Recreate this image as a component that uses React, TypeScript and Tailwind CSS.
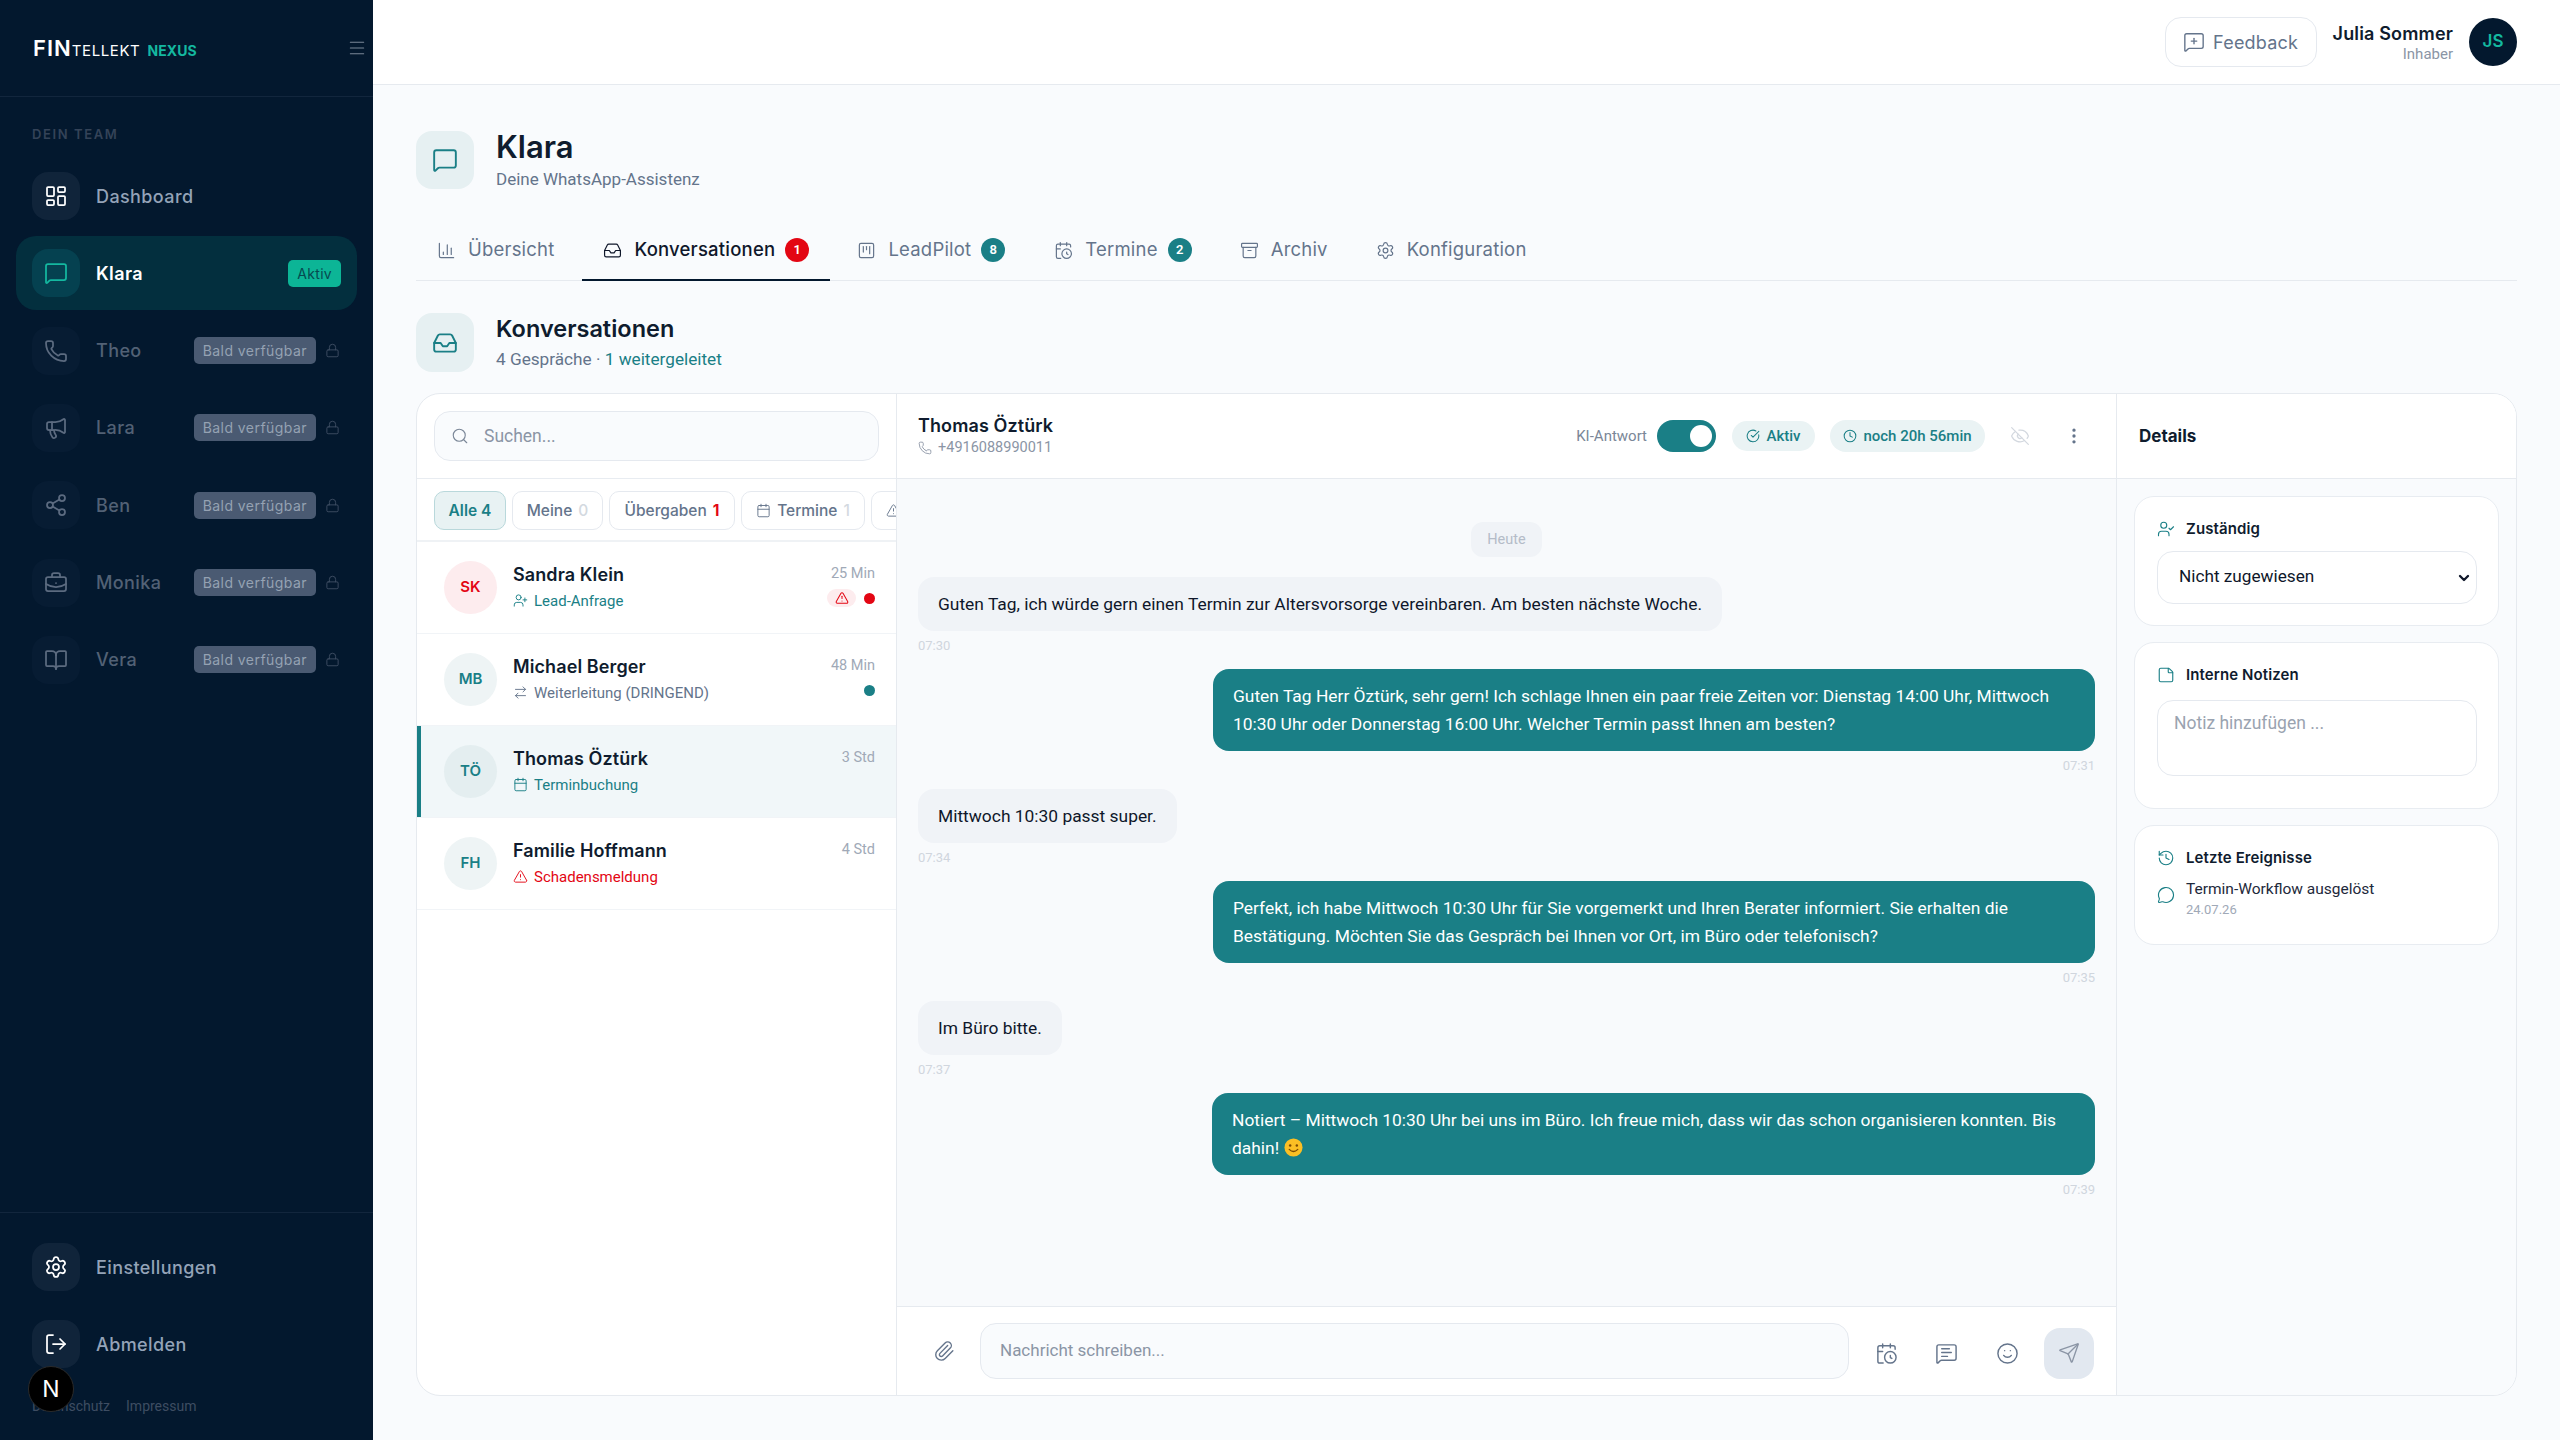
import React from "react";
import {
  LayoutDashboard, MessageSquare, Phone, Megaphone, Share2, BriefcaseBusiness, BookOpen, Lock, Settings, LogOut, Menu,
  MessageSquarePlus, ChartColumn, Inbox, SquareKanban, CalendarClock, Archive, Search, Calendar, TriangleAlert,
  UserPlus, ArrowRightLeft, CircleCheckBig, Clock, EyeOff, EllipsisVertical, Paperclip, MessageSquareText, Smile,
  Send, UserCheck, StickyNote, History, MessageCircle, ChevronDown,
} from "lucide-react";

const head = "font-['Inter','Liberation_Sans',sans-serif]";
const body = "font-['Roboto','Noto_Sans',sans-serif]";

function NavRow({ icon: I, label, active, soon }: any) {
  return (
    <div className={`flex h-[74px] items-center rounded-[20px] pl-4 pr-4 ${active ? "bg-[#032f3e]" : ""}`}>
      <div className={`flex h-12 w-12 shrink-0 items-center justify-center rounded-2xl ${active ? "bg-[#054150]" : soon ? "bg-[#071c33]" : "bg-[#10243a]"}`}>
        <I size={24} strokeWidth={1.75} className={active ? "text-[#14b8a0]" : soon ? "text-[#5c6b80]" : "text-white"} />
      </div>
      <span className={`ml-4 text-[18px] tracking-[0.4px] ${active ? "font-semibold text-white" : soon ? "font-medium text-[#526175]" : "font-medium text-[#94a3b8]"}`}>{label}</span>
      {active && <span className="ml-auto rounded-[5px] bg-[#0cb596] px-[9px] py-[3px] text-[14px] leading-[21px] tracking-[0.3px] text-[#064a50]">Aktiv</span>}
      {soon && (
        <>
          <span className="ml-auto whitespace-nowrap rounded-[5px] bg-[#4a5a72] px-[9px] text-[14px] leading-[27px] tracking-[0.45px] text-[#95a2b3]">Bald verfügbar</span>
          <Lock size={15} strokeWidth={1.5} className="ml-[9px] mr-[1px] text-[#3f4e63]" />
        </>
      )}
    </div>
  );
}

function Sidebar() {
  return (
    <aside className={`${head} relative flex h-[1440px] w-[373px] shrink-0 flex-col bg-[#03182e]`}>
      <div className="flex h-[97px] shrink-0 items-center justify-between border-b border-[#12263d] pl-[33px] pr-[6px]">
        <div className="flex items-baseline">
          <span className="text-[22px] font-semibold tracking-[1px] text-white">FIN</span>
          <span className="text-[15px] font-normal tracking-[0.6px] text-white">TELLEKT</span>
          <span className="ml-[7px] text-[14px] font-bold tracking-[0.1px] text-[#14b8a0]">NEXUS</span>
        </div>
        <Menu size={20} strokeWidth={1.25} className="text-[#7b8798]" />
      </div>
      <div className="px-[32px] pt-[29px] text-[13px] font-semibold leading-4 tracking-[1.6px] text-[#344358]">DEIN TEAM</div>
      <nav className="mt-[17px] flex flex-col gap-[3.33px] px-4">
        <NavRow icon={LayoutDashboard} label="Dashboard" />
        <NavRow icon={MessageSquare} label="Klara" active />
        <NavRow icon={Phone} label="Theo" soon />
        <NavRow icon={Megaphone} label="Lara" soon />
        <NavRow icon={Share2} label="Ben" soon />
        <NavRow icon={BriefcaseBusiness} label="Monika" soon />
        <NavRow icon={BookOpen} label="Vera" soon />
      </nav>
      <div className="mt-auto border-t border-[#12263d] px-4 pt-[17px]">
        <div className="flex flex-col gap-[3px]">
          <NavRow icon={Settings} label="Einstellungen" />
          <NavRow icon={LogOut} label="Abmelden" />
        </div>
        <div className={`${body} flex h-[59px] gap-4 pl-4 pt-[16px] text-[14px] leading-[18px] text-[#3e4d62]`}>
          <span>Datenschutz</span><span>Impressum</span>
        </div>
      </div>
      <div className="absolute left-[28px] top-[1366px] flex h-[46px] w-[46px] items-center justify-center rounded-full border border-[#2a2a2a] bg-black text-[23px] font-normal text-white">N</div>
    </aside>
  );
}

function Tab({ icon: I, label, badge, badgeColor, active, className }: any) {
  return (
    <div className={`relative flex h-[59px] items-center border-b-2 pb-[1px] ${active ? "border-[#03182e]" : "border-transparent"} ${className}`}>
      <I size={19} strokeWidth={1.5} className={active ? "text-[#0f172a]" : "text-[#64748b]"} />
      <span className={`ml-3 ${head} text-[18.5px] tracking-[0.2px] ${active ? "font-medium text-[#0f172a]" : "text-[#64748b]"}`}>{label}</span>
      {badge && <span className={`ml-[10px] flex h-6 w-6 items-center justify-center rounded-full text-[13px] font-semibold text-white ${badgeColor}`}>{badge}</span>}
    </div>
  );
}

function Filter({ children, active, className }: any) {
  return (
    <div className={`flex h-[39px] shrink-0 items-center justify-center gap-[6px] rounded-[10px] border text-[15.5px] font-medium ${head} ${active ? "border-[#b9d8db] bg-[#e8f2f3] text-[#1a7f86]" : "border-[#e5e9ef] bg-white text-[#64748b]"} ${className}`}>
      {children}
    </div>
  );
}

function Conv({ init, name, sub, subIcon: S, subColor, time, selected, avatar, right }: any) {
  return (
    <div className={`relative flex h-[92px] items-center border-b border-[#f1f4f7] pl-[27px] pr-[21px] ${selected ? "bg-[#f1f7f9]" : "bg-white"}`}>
      {selected && <div className="absolute bottom-0 left-0 top-0 w-1 bg-[#1a7f86]" />}
      <div className={`flex h-[53px] w-[53px] shrink-0 items-center justify-center rounded-full text-[15px] font-semibold ${head} ${avatar}`}>{init}</div>
      <div className="mb-[2px] ml-4 min-w-0 flex-1">
        <div className={`${head} text-[18px] font-semibold leading-[26px] tracking-[0.1px] text-[#0f1c2e]`}>{name}</div>
        <div className={`mt-[2px] flex items-center gap-[6px] text-[15px] leading-[22px] ${subColor}`}>
          <S size={15} strokeWidth={1.5} className="shrink-0" />
          <span className="whitespace-nowrap">{sub}</span>
        </div>
      </div>
      <div className="flex h-[60px] flex-col items-end self-start pt-[22px]">
        <div className="text-[14.5px] leading-5 text-[#a0a9b7]">{time}</div>
        {right}
      </div>
    </div>
  );
}

function Bubble({ out, time, children, width }: any) {
  return (
    <div className={`flex flex-col ${out ? "items-end" : "items-start"}`}>
      <div className={`rounded-[16px] px-5 py-[13px] text-[17.4px] leading-[28px] ${out ? "bg-[#1a7f86] text-white" : "bg-[#f0f3f7] text-[#0f172a]"} ${width}`}>{children}</div>
      <div className="mt-[6px] text-[13px] leading-[18px] text-[#d0d6de]">{time}</div>
    </div>
  );
}

function DetailCard({ icon: I, title, children, className }: any) {
  return (
    <div className={`rounded-[20px] border border-[#e8ecf1] bg-white px-[22px] pt-[21px] ${className}`}>
      <div className="flex items-center gap-[11px]">
        <I size={18} strokeWidth={1.5} className="text-[#1a7f86]" />
        <span className={`${head} text-[15px] font-semibold tracking-[0.1px] text-[#0f1c2e]`}>{title}</span>
      </div>
      {children}
    </div>
  );
}

export default function App() {
  return (
    <div className={`${body} flex h-[1440px] w-[2560px] overflow-hidden bg-[#f9fbfd]`}>
      <Sidebar />
      <main className="flex min-w-0 flex-1 flex-col">
        <header className="flex h-[85px] shrink-0 items-center justify-end border-b border-[#e6eaef] bg-white pr-[43px]">
          <div className="flex h-[50px] w-[152px] items-center justify-center gap-2 rounded-2xl border border-[#e5e9ef] bg-white text-[#64748b]">
            <MessageSquarePlus size={22} strokeWidth={1.5} />
            <span className={`${head} text-[18px] tracking-[0.2px]`}>Feedback</span>
          </div>
          <div className="ml-4 mr-4 flex flex-col items-end">
            <span className={`${head} text-[18px] font-semibold leading-[23px] tracking-[0.15px] text-[#0f1c2e]`}>Julia Sommer</span>
            <span className="text-[15px] leading-[18px] text-[#8b95a5]">Inhaber</span>
          </div>
          <div className={`${head} flex h-12 w-12 items-center justify-center rounded-full bg-[#03182e] text-[17px] font-semibold text-[#14b8a0]`}>JS</div>
        </header>

        <div className="flex min-h-0 flex-1 flex-col px-[43px] pb-[44px]">
          <div className="mt-[46px] flex h-[58px] items-center">
            <div className="flex h-[58px] w-[58px] items-center justify-center rounded-2xl bg-[#e6f0f2]">
              <MessageSquare size={26} strokeWidth={1.75} className="text-[#1a7f86]" />
            </div>
            <div className="ml-[22px]">
              <div className={`${head} mb-[2px] text-[31px] font-semibold leading-[36px] text-[#0f1c2e]`}>Klara</div>
              <div className="text-[17px] leading-[24px] text-[#64748b]">Deine WhatsApp-Assistenz</div>
            </div>
          </div>

          <div className="mt-[33px] flex h-[59px] border-b border-[#e6eaef]">
            <Tab icon={ChartColumn} label="Übersicht" className="ml-[21px]" />
            <Tab icon={Inbox} label="Konversationen" badge="1" badgeColor="bg-[#e30613]" active className="ml-[28px] w-[248px] pl-[21px]" />
            <Tab icon={SquareKanban} label="LeadPilot" badge="8" badgeColor="bg-[#1a7f86]" className="ml-[27px]" />
            <Tab icon={CalendarClock} label="Termine" badge="2" badgeColor="bg-[#1a7f86]" className="ml-[49px]" />
            <Tab icon={Archive} label="Archiv" className="ml-[48px]" />
            <Tab icon={Settings} label="Konfiguration" className="ml-[48px]" />
          </div>

          <div className="mt-[32px] flex h-[59px] items-center">
            <div className="flex h-[59px] w-[58px] items-center justify-center rounded-2xl bg-[#e6f0f2]">
              <Inbox size={26} strokeWidth={1.75} className="text-[#1a7f86]" />
            </div>
            <div className="ml-[22px]">
              <div className={`${head} mb-[2px] text-[23.5px] font-semibold leading-[30px] text-[#0f1c2e]`}>Konversationen</div>
              <div className="text-[17.2px] leading-[26px] text-[#64748b]">4 Gespräche · <span className="text-[#1a7f86]">1 weitergeleitet</span></div>
            </div>
          </div>

          <section className="mt-[21px] flex min-h-0 flex-1 overflow-hidden rounded-[24px] border border-[#e6eaef] bg-white">
            <div className="flex w-[480px] shrink-0 flex-col border-r border-[#e6eaef]">
              <div className="flex h-[85px] shrink-0 items-center border-b border-[#e8ecf1] px-[17px]">
                <div className="flex h-[50px] w-[447px] items-center rounded-2xl border border-[#e5e9ef] bg-[#f9fbfd] pl-4 text-[#94a3b8]">
                  <Search size={18} strokeWidth={1.5} className="text-[#7b8798]" />
                  <input placeholder="Suchen..." className="ml-[15px] flex-1 bg-transparent text-[17.5px] outline-none placeholder:text-[#8b95a5]" />
                </div>
              </div>
              <div className="flex h-[63px] shrink-0 items-center gap-[6px] overflow-hidden border-b-2 border-[#eff2f5] pl-[17px] pt-[2px]">
                <Filter active className="w-[72px] font-semibold">Alle 4</Filter>
                <Filter className="w-[91px]">Meine <span className="text-[#d3d9e0]">0</span></Filter>
                <Filter className="w-[126px]">Übergaben <span className="font-bold text-[#e30613]">1</span></Filter>
                <Filter className="w-[124px]"><Calendar size={15} strokeWidth={1.5} />Termine <span className="text-[#d3d9e0]">1</span></Filter>
                <Filter className="w-[60px] !justify-start pl-[14px]"><TriangleAlert size={15} strokeWidth={1.5} /></Filter>
              </div>
              <Conv init="SK" name="Sandra Klein" sub="Lead-Anfrage" subIcon={UserPlus} subColor="text-[#1a7f86]" time="25 Min" avatar="bg-[#fdecee] text-[#e30613]"
                right={<div className="mt-[5px] flex items-center gap-2">
                  <span className="flex h-[18px] w-[29px] items-center justify-center rounded-full bg-[#fdecee]"><TriangleAlert size={14} strokeWidth={1.75} className="text-[#e30613]" /></span>
                  <span className="h-[11px] w-[11px] rounded-full bg-[#e30613]" />
                </div>} />
              <Conv init="MB" name="Michael Berger" sub="Weiterleitung (DRINGEND)" subIcon={ArrowRightLeft} subColor="text-[#64748b]" time="48 Min" avatar="bg-[#eef4f5] text-[#1a7f86]"
                right={<div className="mt-[9px] flex items-center"><span className="h-[11px] w-[11px] rounded-full bg-[#1a7f86]" /></div>} />
              <Conv selected init="TÖ" name="Thomas Öztürk" sub="Terminbuchung" subIcon={Calendar} subColor="text-[#1a7f86]" time="3 Std" avatar="bg-[#e4eef0] text-[#1a7f86]" />
              <Conv init="FH" name="Familie Hoffmann" sub="Schadensmeldung" subIcon={TriangleAlert} subColor="text-[#e30613]" time="4 Std" avatar="bg-[#eef4f5] text-[#1a7f86]" />
            </div>

            <div className="flex min-w-0 flex-1 flex-col">
              <div className="flex h-[85px] shrink-0 items-center border-b border-[#e6eaef] pl-[21px] pr-[32px]">
                <div>
                  <div className={`${head} text-[18px] font-semibold leading-[24px] tracking-[0.1px] text-[#0f1c2e]`}>Thomas Öztürk</div>
                  <div className="flex items-center gap-[6px] text-[14.5px] leading-[20px] text-[#8b95a5]"><Phone size={14} strokeWidth={1.5} />+4916088990011</div>
                </div>
                <span className="ml-auto text-[15px] text-[#7b8798]">KI-Antwort</span>
                <div className="ml-[10px] flex h-8 w-[59px] items-center justify-end rounded-full bg-[#1a7f86] pr-1">
                  <div className="h-[22px] w-[22px] rounded-full bg-white" />
                </div>
                <div className="ml-4 flex h-[30px] w-[83px] items-center justify-center gap-[6px] rounded-full bg-[#eaf3f4] text-[15px] font-medium text-[#1a7f86]"><CircleCheckBig size={14} strokeWidth={1.75} />Aktiv</div>
                <div className="ml-[15px] flex h-8 w-[155px] items-center justify-center gap-[6px] rounded-full bg-[#eaf3f4] text-[15px] font-medium text-[#1a7f86]"><Clock size={14} strokeWidth={1.75} />noch 20h 56min</div>
                <EyeOff size={20} strokeWidth={1.5} className="ml-[25px] text-[#d3d8df]" />
                <EllipsisVertical size={20} strokeWidth={2} className="ml-[34px] text-[#64748b]" />
              </div>

              <div className="flex min-h-0 flex-1 flex-col bg-[#f8fafc] px-[21px] pt-[43px]">
                <div className="flex justify-center">
                  <span className="rounded-[12px] bg-[#f0f3f7] px-4 py-[7px] text-[14.5px] leading-[21px] text-[#b4bcc8]">Heute</span>
                </div>
                <div className="mt-[20px] flex flex-col gap-[14px]">
                  <Bubble time="07:30">Guten Tag, ich würde gern einen Termin zur Altersvorsorge vereinbaren. Am besten nächste Woche.</Bubble>
                  <Bubble out time="07:31" width="w-[882px]">Guten Tag Herr Öztürk, sehr gern! Ich schlage Ihnen ein paar freie Zeiten vor: Dienstag 14:00 Uhr, Mittwoch 10:30 Uhr oder Donnerstag 16:00 Uhr. Welcher Termin passt Ihnen am besten?</Bubble>
                  <Bubble time="07:34">Mittwoch 10:30 passt super.</Bubble>
                  <Bubble out time="07:35" width="w-[882px]">Perfekt, ich habe Mittwoch 10:30 Uhr für Sie vorgemerkt und Ihren Berater informiert. Sie erhalten die Bestätigung. Möchten Sie das Gespräch bei Ihnen vor Ort, im Büro oder telefonisch?</Bubble>
                  <Bubble time="07:37">Im Büro bitte.</Bubble>
                  <Bubble out time="07:39" width="w-[883px]">
                    Notiert – Mittwoch 10:30 Uhr bei uns im Büro. Ich freue mich, dass wir das schon organisieren konnten. Bis dahin!{" "}
                    <svg viewBox="0 0 20 20" className="inline h-[19px] w-[19px] align-[-3px]">
                      <circle cx="10" cy="10" r="9.5" fill="#fbbf24" />
                      <circle cx="6.5" cy="8" r="1.3" fill="#7c4a03" />
                      <circle cx="13.5" cy="8" r="1.3" fill="#7c4a03" />
                      <path d="M5.5 12 Q10 16.5 14.5 12" fill="none" stroke="#7c4a03" strokeWidth="1.4" strokeLinecap="round" />
                    </svg>
                  </Bubble>
                </div>
              </div>

              <div className="flex h-[89px] shrink-0 items-center border-t border-[#e6eaef] bg-white pl-[36px]">
                <Paperclip size={22} strokeWidth={1.5} className="text-[#64748b]" />
                <div className="ml-[25px] flex h-[56px] w-[869px] items-center rounded-2xl border border-[#e5e9ef] bg-[#f9fbfd] px-[19px]">
                  <input placeholder="Nachricht schreiben..." className="flex-1 bg-transparent text-[17px] outline-none placeholder:text-[#8b95a5]" />
                </div>
                <CalendarClock size={23} strokeWidth={1.5} className="ml-[26px] mt-[4px] text-[#64748b]" />
                <MessageSquareText size={23} strokeWidth={1.5} className="ml-[37px] mt-[4px] text-[#64748b]" />
                <Smile size={23} strokeWidth={1.5} className="ml-[38px] mt-[4px] text-[#64748b]" />
                <div className="ml-[25px] mt-[4px] flex h-[51px] w-[50px] items-center justify-center rounded-2xl bg-[#e2e8f0]">
                  <Send size={22} strokeWidth={1.5} className="text-[#8b95a5]" />
                </div>
              </div>
            </div>

            <aside className="flex w-[400px] shrink-0 flex-col border-l border-[#e6eaef] bg-[#f9fbfd]">
              <div className={`${head} flex h-[85px] shrink-0 items-center border-b border-[#e6eaef] bg-white pl-[22px] pt-[2px] text-[17px] font-bold text-[#0f1c2e]`}>Details</div>
              <div className="flex flex-col gap-[16px] px-[17px] pt-[17px]">
                <DetailCard icon={UserCheck} title="Zuständig" className="h-[130px]">
                  <div className="relative mt-[10px] w-[320px]">
                    <select className="h-[53px] w-full appearance-none rounded-2xl border border-[#e5e9ef] bg-white pl-[21px] text-[17.2px] text-[#0f172a] outline-none">
                      <option>Nicht zugewiesen</option>
                    </select>
                    <ChevronDown size={16} strokeWidth={3.5} className="pointer-events-none absolute right-[5px] top-[19px] text-[#0f172a]" />
                  </div>
                </DetailCard>
                <DetailCard icon={StickyNote} title="Interne Notizen" className="h-[167px]">
                  <textarea placeholder="Notiz hinzufügen ..." className="mt-[13px] block h-[76px] w-[320px] resize-none rounded-2xl border border-[#e5e9ef] bg-white px-[16px] py-[9px] text-[17.5px] outline-none placeholder:text-[#9aa3b0]" />
                </DetailCard>
                <DetailCard icon={History} title="Letzte Ereignisse" className="h-[120px]">
                  <div className="mt-[9px] flex gap-[11px]">
                    <MessageCircle size={18} strokeWidth={1.5} className="mt-[7px] text-[#1a7f86]" />
                    <div>
                      <div className="text-[15.5px] leading-[20px] text-[#1e293b]">Termin-Workflow ausgelöst</div>
                      <div className="mt-[2px] text-[13px] leading-[18px] text-[#a0a9b7]">24.07.26</div>
                    </div>
                  </div>
                </DetailCard>
              </div>
            </aside>
          </section>
        </div>
      </main>
    </div>
  );
}
